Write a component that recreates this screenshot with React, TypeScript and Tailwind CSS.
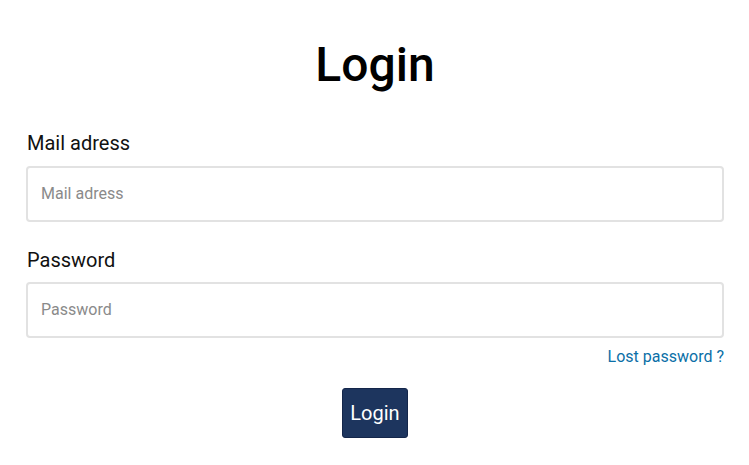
export default function App() {
  return (
    <div
      className="min-h-screen bg-white pl-[26px] pr-[25px] pt-[36px]"
      style={{ fontFamily: "Roboto, 'Noto Sans', sans-serif" }}
    >
      <h1 className="text-center text-[48px] leading-[1.2] font-medium text-black">
        Login
      </h1>

      <form className="mt-[35px] flex flex-col" onSubmit={(e) => e.preventDefault()}>
        <label className="pl-[1px] text-[20px] leading-[28px] text-[#111]">Mail adress</label>
        <input
          type="text"
          placeholder="Mail adress"
          className="mt-[9px] h-[56px] w-full rounded-[4px] border-2 border-[#e2e2e2] px-[13px] text-[16px] text-black placeholder:text-[#8a8a8a] focus:outline-none"
        />

        <label className="mt-[24px] pl-[1px] text-[20px] leading-[28px] text-[#111]">Password</label>
        <input
          type="password"
          placeholder="Password"
          className="mt-[8px] h-[56px] w-full rounded-[4px] border-2 border-[#e2e2e2] px-[13px] text-[16px] text-black placeholder:text-[#8a8a8a] focus:outline-none"
        />

        <div className="mt-[7px] flex justify-end">
          <a href="#" className="text-[16px] leading-[24px] text-[#0b6fa7]">
            Lost password ?
          </a>
        </div>

        <div className="mt-[19px] flex justify-center">
          <button
            type="submit"
            className="h-[50px] rounded-[3px] border border-[#14264a] bg-[#1d355e] px-[7px] text-[20px] leading-[28px] text-white"
          >
            Login
          </button>
        </div>
      </form>
    </div>
  );
}
